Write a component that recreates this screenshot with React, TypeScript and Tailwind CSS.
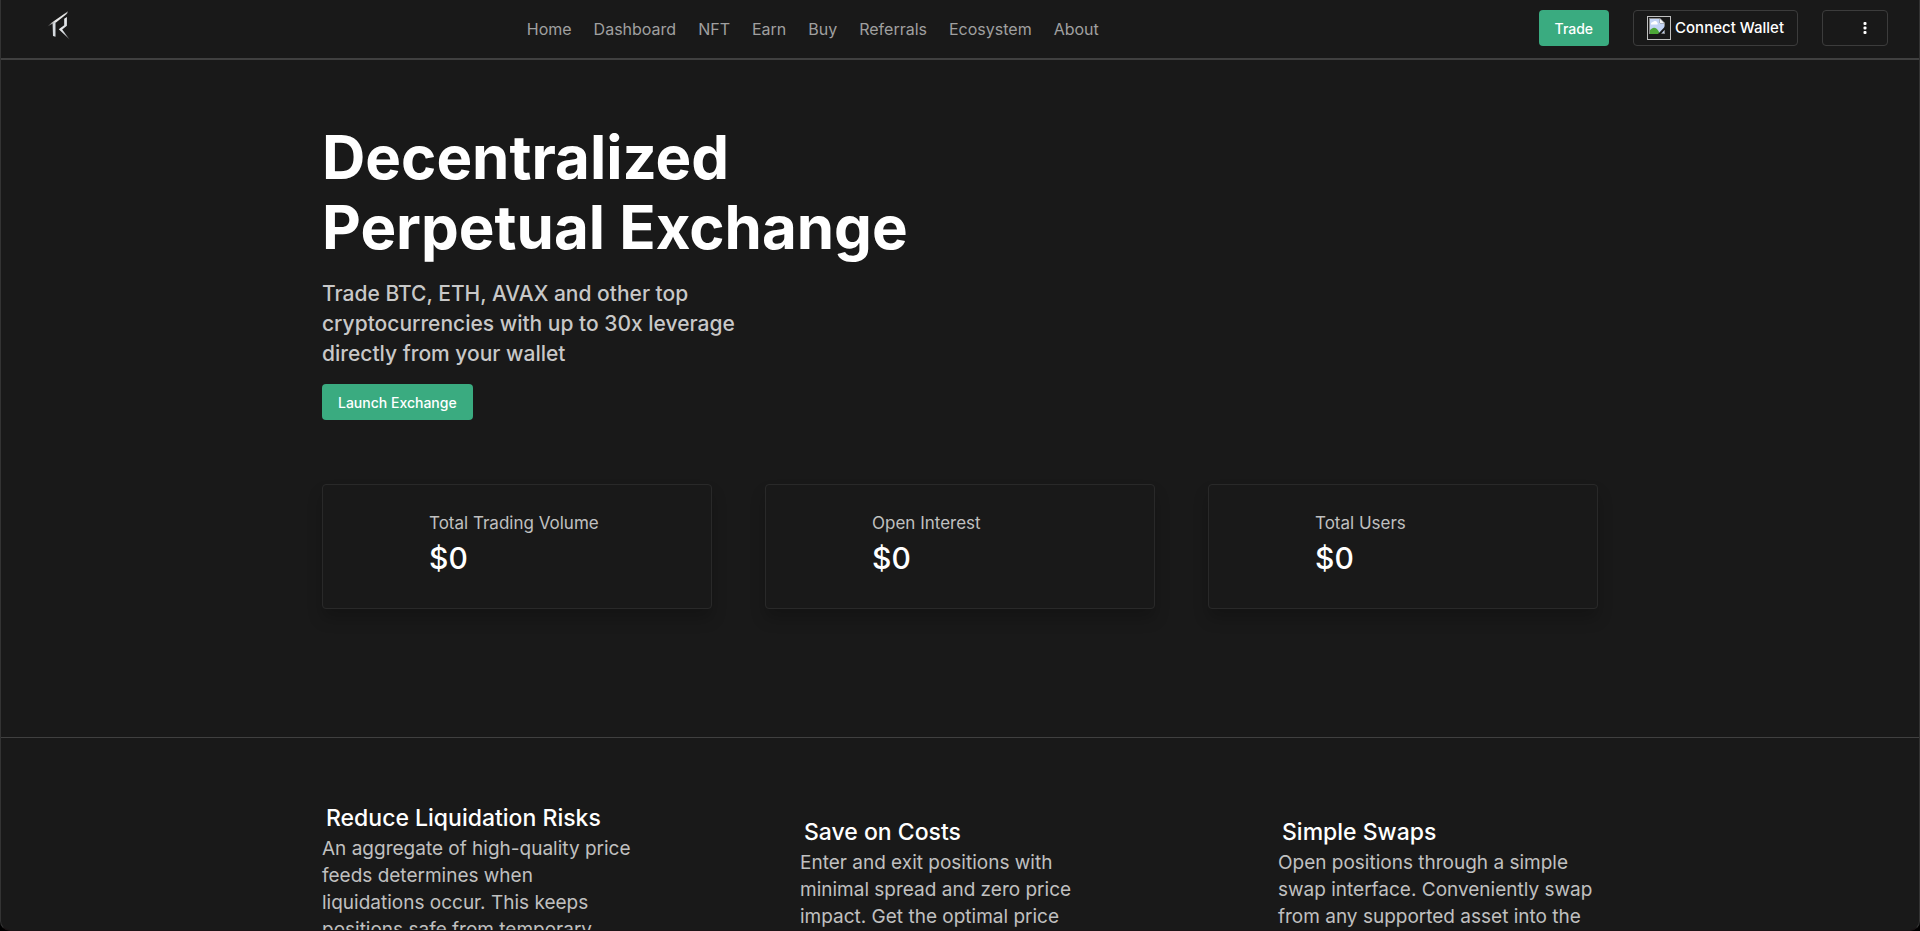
const links = ["Home", "Dashboard", "NFT", "Earn", "Buy", "Referrals", "Ecosystem", "About"]

const stats = [
  { label: "Total Trading Volume", value: "$0" },
  { label: "Open Interest", value: "$0" },
  { label: "Total Users", value: "$0" },
]

const features = [
  {
    title: "Reduce Liquidation Risks",
    lines: [
      "An aggregate of high-quality price",
      "feeds determines when",
      "liquidations occur. This keeps",
      "positions safe from temporary",
      "wicks.",
    ],
  },
  {
    title: "Save on Costs",
    lines: [
      "Enter and exit positions with",
      "minimal spread and zero price",
      "impact. Get the optimal price",
      "without incurring additional costs.",
    ],
  },
  {
    title: "Simple Swaps",
    lines: [
      "Open positions through a simple",
      "swap interface. Conveniently swap",
      "from any supported asset into the",
      "position of your choice.",
    ],
  },
]

function Logo() {
  return (
    <svg viewBox="0 0 24 30" className="h-[30px] w-6" aria-hidden="true">
      <defs>
        <linearGradient id="roof" x1="0" y1="1" x2="1" y2="0">
          <stop offset="0" stopColor="#444" />
          <stop offset="0.35" stopColor="#e8e8e8" />
          <stop offset="0.8" stopColor="#e4e4e4" />
          <stop offset="1" stopColor="#999" />
        </linearGradient>
        <linearGradient id="leg" x1="0" y1="0" x2="1" y2="1">
          <stop offset="0" stopColor="#fff" />
          <stop offset="0.6" stopColor="#d5d9de" />
          <stop offset="1" stopColor="#666" />
        </linearGradient>
      </defs>
      <path d="M0.5 16.5 4.5 12.8 21 1.3 20 3.8 9 12.6 5 14Z" fill="url(#roof)" />
      <path d="M5.6 13.4 8.5 12.2V26.8L6 26Z" fill="#d5d9de" />
      <path d="M17.2 8.8 19.9 7V15.8L15.2 19.4 22.6 29.6 11.8 19.3 17.2 15.2Z" fill="url(#leg)" />
    </svg>
  )
}

// Placeholder for the wallet picture
function MissingImage() {
  return (
    <svg viewBox="0 0 24 24" className="size-6" aria-hidden="true">
      <rect x="0.5" y="0.5" width="23" height="23" fill="none" stroke="#c0c0c0" />
      <path d="M2 2.5H13L17.5 7V18H2Z" fill="#c3d4f5" />
      <path d="M4 8.5a2 2 0 0 1 2-2.5 2.5 2.5 0 0 1 4.5 1 1.5 1.5 0 0 1 0 1.5H4Z" fill="#fff" />
      <path d="M2 18v-2.5q5.5-7.5 10 .5l1 2Z" fill="#4ca637" />
      <path d="M2.5 18V2.5H13L17.5 7v3M13 2.5V7h4.5M14 17.5h3.5V14" fill="none" stroke="#8a8a8a" />
      <path d="M13 3v4h4Z" fill="#f4f4f4" />
      <path d="M10.5 18.5 18 10.5v3L13.5 18.5Z" fill="#191919" />
    </svg>
  )
}

export default function App() {
  return (
    <div className="h-screen bg-black font-['Inter',sans-serif]">
      <div className="h-full overflow-hidden rounded-b-[10px] border-x border-b border-x-[#333] border-b-[#1c1416] bg-[#191919]">
        {/* Header */}
        <header className="flex h-[60px] items-center justify-between border-b-2 border-[#404040] pr-[31px] pl-[46px]">
          <a href="#" aria-label="Home page" className="-mt-2 pr-4">
            <Logo />
          </a>
          <nav className="flex gap-[22px] text-[16px] text-[#a0a0a0]">
            {links.map((link) => (
              <a key={link} href="#">
                {link}
              </a>
            ))}
          </nav>
          <div className="flex gap-6 pb-0.5 font-medium text-white">
            <button className="h-9 rounded bg-[#3aab80] px-4 text-[14px]">Trade</button>
            <button className="flex h-9 items-center gap-1 rounded border border-[#3c3c3c] px-[13px] text-[15px]">
              <MissingImage />
              Connect Wallet
            </button>
            <button
              aria-label="More"
              className="flex h-9 w-[66px] items-center justify-end rounded border border-[#3c3c3c] pr-5"
            >
              <svg viewBox="0 0 4 12" className="h-3 w-1" fill="#fff">
                <rect x="0.5" y="0" width="3" height="3" rx="1" />
                <rect x="0.5" y="4.5" width="3" height="3" rx="1" />
                <rect x="0.5" y="9" width="3" height="3" rx="1" />
              </svg>
            </button>
          </div>
        </header>

        {/* Hero */}
        <section className="border-b border-[#404040] pt-[62px] pb-32">
          <div className="mx-auto max-w-[1276px]">
            <h1 className="text-[60px] leading-[70px] font-bold text-white">
              Decentralized
              <br />
              Perpetual Exchange
            </h1>
            <p className="mt-[17px] text-[21px] leading-[30px] font-medium text-[#c8c8c8]">
              Trade BTC, ETH, AVAX and other top
              <br />
              cryptocurrencies with up to 30x leverage
              <br />
              directly from your wallet
            </p>
            <button className="mt-[15px] h-9 rounded bg-[#3aab80] px-4 text-[14px] font-medium text-white">
              Launch Exchange
            </button>

            {/* Stats */}
            <div className="mt-16 grid grid-cols-3 gap-[53px]">
              {stats.map((stat) => (
                <div
                  key={stat.label}
                  className="h-[125px] rounded border border-[#292929] pt-[26px] pl-[106px] shadow-[0_10px_15px_rgba(0,0,0,0.2)]"
                >
                  <div className="text-[17px] leading-6 text-[#c0c0c0]">{stat.label}</div>
                  <div className="mt-1 text-[30px] leading-[38px] font-medium text-white">{stat.value}</div>
                </div>
              ))}
            </div>
          </div>
        </section>

        {/* Features */}
        <section className="mx-auto flex max-w-[1276px] items-center justify-between pt-16">
          {features.map((feature) => (
            <div key={feature.title} className="w-80">
              <h2 className="pl-1 text-[23px] leading-[33px] font-medium text-white">{feature.title}</h2>
              <p className="text-[19px] leading-[27px] whitespace-pre text-[#c0c0c0]">
                {feature.lines.join("\n")}
              </p>
            </div>
          ))}
        </section>
      </div>
    </div>
  )
}
